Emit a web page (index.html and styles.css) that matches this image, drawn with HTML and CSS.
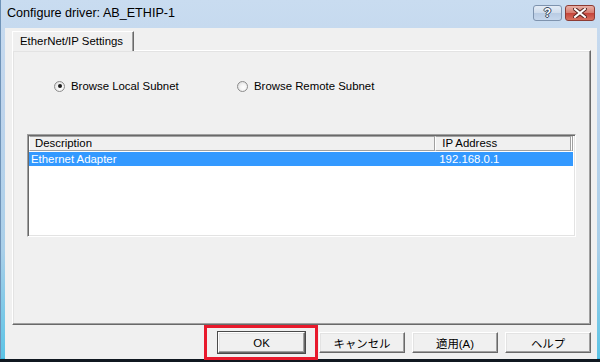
FILE: index.html
```html
<!DOCTYPE html>
<html lang="ja">
<head>
    <meta charset="UTF-8">
    <title>Configure driver: AB_ETHIP-1</title>
    <link rel="stylesheet" href="styles.css">
</head>
<body>
<div class="window">
    <div class="titlebar">
        <span class="title">Configure driver: AB_ETHIP-1</span>
        <div class="caption-buttons">
            <div class="cap-btn help">?</div>
            <div class="cap-btn close">
                <svg width="14" height="10" viewBox="0 0 14 10">
                    <path d="M2 1 L12 9 M12 1 L2 9" stroke="#5a2520" stroke-width="4" stroke-linecap="square"/>
                    <path d="M2 1 L12 9 M12 1 L2 9" stroke="#ffffff" stroke-width="2" stroke-linecap="square"/>
                </svg>
            </div>
        </div>
    </div>

    <div class="client">
        <div class="tabs">
            <div class="tab">EtherNet/IP Settings</div>
        </div>

        <div class="panel">
            <div class="radios">
                <label class="radio first"><span class="radio-mark checked"></span>Browse Local Subnet</label>
                <label class="radio"><span class="radio-mark"></span>Browse Remote Subnet</label>
            </div>

            <div class="listview">
                <div class="lv-header">
                    <div class="col desc">Description</div>
                    <div class="col ip">IP Address</div>
                    <div class="col filler"></div>
                </div>
                <div class="lv-row selected">
                    <div class="col desc">Ethernet Adapter</div>
                    <div class="col ip">192.168.0.1</div>
                </div>
            </div>
        </div>

        <div class="button-row">
            <div class="highlight">
                <div class="btn">OK</div>
            </div>
            <div class="btn">キャンセル</div>
            <div class="btn">適用(A)</div>
            <div class="btn">ヘルプ</div>
        </div>
    </div>
</div>
</body>
</html>
```

FILE: styles.css
```css
body {
    margin: 0;
    width: 600px;
    height: 362px;
    overflow: hidden;
    background: #101820;
    font-family: "Liberation Sans", Arial, "Noto Sans CJK JP", sans-serif;
    font-size: 11.4px;
    color: #000;
}
.window {
    height: 359px;
    padding: 0 4px 1px 4px;
    background: linear-gradient(to bottom, #c9dcf0 0, #bed4ec 30%, #a9cfe9 70%, #5cc4e6 100%);
    box-sizing: border-box;
    border-left: 1px solid #6f93b8;
    border-bottom: 1px solid #3fb6de;
}
.titlebar {
    height: 28px;
    display: flex;
    align-items: flex-start;
    justify-content: space-between;
}
.title {
    font-size: 12.6px;
    margin-top: 6px;
    margin-left: 2px;
}
.caption-buttons {
    display: flex;
    gap: 3px;
    margin-top: 5px;
    margin-right: 1px;
}
.cap-btn {
    height: 14px;
    border-radius: 3px;
    display: flex;
    align-items: center;
    justify-content: center;
}
.help {
    width: 27px;
    border: 1px solid #7e93ae;
    background: linear-gradient(to bottom, #e4ecf6 0, #cfdcec 50%, #b8cbe3 51%, #c6d7ec 100%);
    color: #fff;
    font-weight: bold;
    font-size: 12px;
    text-shadow: 0 0 1px #2f3f55, 1px 0 0 #3a4a60, -1px 0 0 #3a4a60, 0 1px 0 #3a4a60, 0 -1px 0 #3a4a60;
}
.close {
    width: 28px;
    border: 1px solid #8d3b33;
    background: linear-gradient(to bottom, #e8b0a7 0, #d67b6e 50%, #c5443a 51%, #d7705f 100%);
}
.client {
    width: 592px;
    height: 331px;
    background: #f0f0f0;
    padding: 3px 6px 0 7px;
    box-sizing: border-box;
}
.tabs {
    display: flex;
    height: 19px;
}
.tab {
    width: 122px;
    border-top: 1px solid #fff;
    border-left: 1px solid #fff;
    border-right: 1px solid #696969;
    box-shadow: inset -1px 0 #a0a0a0;
    padding: 3px 0 0 7px;
    box-sizing: border-box;
    white-space: nowrap;
    position: relative;
    z-index: 1;
    background: #f0f0f0;
    margin-bottom: -1px;
    height: 20px;
}
.panel {
    height: 275px;
    border-top: 1px solid #fff;
    border-left: 1px solid #fff;
    border-right: 1px solid #696969;
    border-bottom: 1px solid #696969;
    box-shadow: inset -1px -1px #a0a0a0, inset 1px 1px #e3e3e3;
    box-sizing: border-box;
    padding: 29px 14px 0 14px;
}
.radios {
    display: flex;
    align-items: center;
    height: 12px;
    padding-left: 27px;
}
.radio {
    display: flex;
    align-items: center;
    gap: 6px;
    white-space: nowrap;
}
.radio.first {
    width: 183px;
}
.radio-mark {
    width: 11px;
    height: 11px;
    border: 1px solid #8c8c8c;
    border-radius: 50%;
    box-sizing: border-box;
    background: radial-gradient(circle at 60% 60%, #ffffff 0, #f4f4f4 40%, #d3d3d3 100%);
    display: flex;
    align-items: center;
    justify-content: center;
}
.radio-mark.checked::after {
    content: "";
    width: 4px;
    height: 4px;
    border-radius: 50%;
    background: #1c1c1c;
}
.listview {
    margin-top: 42px;
    width: 549px;
    height: 103px;
    border-top: 1px solid #a0a0a0;
    border-left: 1px solid #a0a0a0;
    border-right: 1px solid #fff;
    border-bottom: 1px solid #fff;
    box-shadow: inset 1px 1px #696969, inset -1px -1px #e3e3e3;
    background: #fff;
    box-sizing: border-box;
    padding: 1px 2px 1px 1px;
}
.lv-header {
    display: flex;
    height: 15px;
}
.lv-header .col {
    height: 15px;
    box-sizing: border-box;
    border: 1px solid #a0a0a0;
    border-left-color: #fff;
    border-top-color: #a0a0a0;
    background: #f0f0f0;
    line-height: 13px;
}
.col.desc {
    width: 407px;
    padding-left: 5px;
}
.col.ip {
    width: 136px;
    padding-left: 6px;
}
.lv-header .col.filler {
    flex: 1;
    padding: 0;
}
.lv-row {
    display: flex;
    height: 14px;
    line-height: 14px;
    margin-top: 1px;
}
.lv-row .col.desc {
    padding-left: 2px;
}
.lv-row .col.ip {
    padding-left: 8px;
}
.lv-row.selected {
    background: #3399ff;
    color: #fff;
}
.button-row {
    display: flex;
    justify-content: flex-end;
    align-items: flex-start;
}
.highlight {
    border: 3px solid #e8192c;
    padding: 4px 10px 4px 11px;
    margin-right: 1px;
}
.button-row > .btn {
    margin-top: 7px;
    margin-left: 7px;
}
.button-row > .highlight + .btn {
    margin-left: 0;
}
.btn {
    width: 86px;
    height: 21px;
    box-sizing: border-box;
    border-top: 1px solid #fff;
    border-left: 1px solid #fff;
    border-right: 1px solid #696969;
    border-bottom: 1px solid #696969;
    box-shadow: inset -1px -1px #a0a0a0, inset 1px 1px #e3e3e3;
    background: #f0f0f0;
    display: flex;
    align-items: center;
    justify-content: center;
}
.highlight .btn {
    width: 87px;
    outline: 1px solid #4a4a4a;
    outline-offset: 0;
}
```
